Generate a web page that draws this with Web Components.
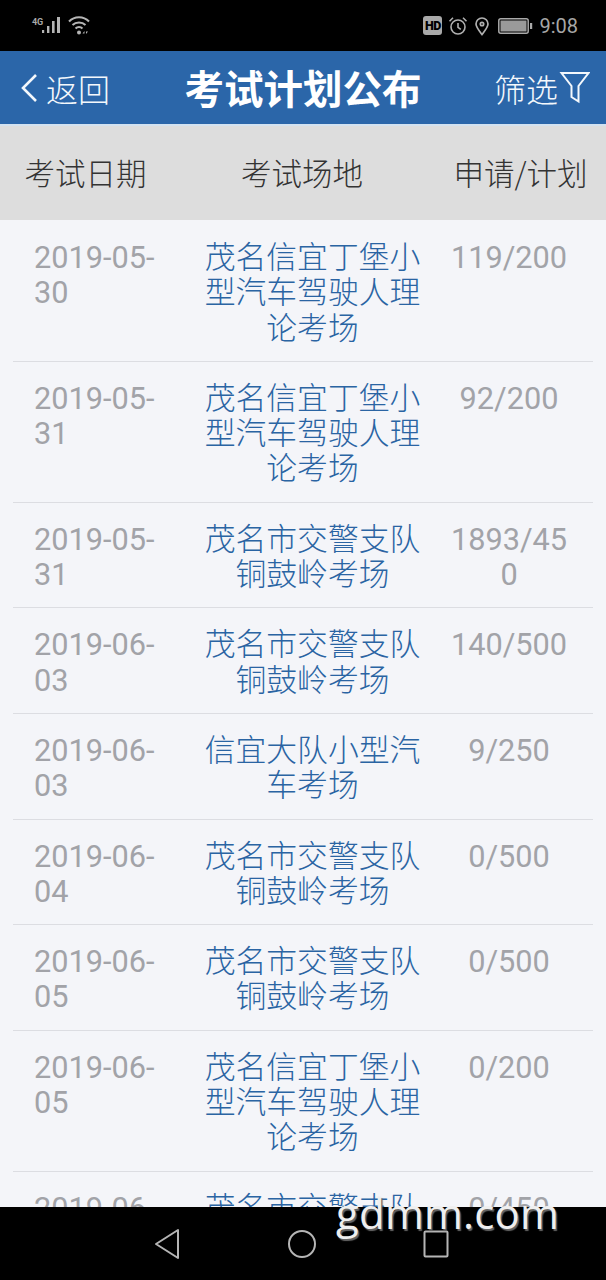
<!DOCTYPE html>
<html lang="zh-CN"><head><meta charset="utf-8"><title>考试计划公布</title>
<style>
html,body{margin:0;padding:0;background:#000}
body{width:606px;height:1280px;overflow:hidden;font-family:Roboto,"Noto Sans CJK SC",sans-serif}
</style></head><body>
<app-screen></app-screen>
<script>
const def=(name,html)=>{customElements.define(name,class extends HTMLElement{
  connectedCallback(){ if(this.shadowRoot)return; const r=this.attachShadow({mode:'open'}); r.innerHTML=typeof html==='function'?html(this):html; }
});};
def('status-bar',`<style>
:host{display:flex;height:51px;background:#000;align-items:center;padding:0 28px 0 31px;box-sizing:border-box;color:#a9a9a9;flex:none}
.left{display:flex;align-items:center;gap:5px;margin-top:-1px}
.sig{position:relative;width:32px;height:26px}
.g{font:700 9px/8px Roboto,sans-serif;position:absolute;left:1px;top:5.500px;letter-spacing:-.2px}
svg{display:block;flex:none}
.sp{flex:1}
.right{display:flex;align-items:center}
.hd{width:19px;height:19px;background:#a9a9a9;color:#000;border-radius:3px;font:900 12.500px/19px Roboto,sans-serif;text-align:center;letter-spacing:-.5px;margin-right:6px;margin-left:1px}
.t{font:400 20px/22px Roboto,sans-serif;margin-left:6px;color:#a6a6a6}
</style>
<div class="left"><div class="sig"><span class="g">4G</span>
<svg width="32" height="26" viewBox="0 0 32 26" fill="#b5b5b5"><rect x="11" y="18" width="2.200" height="3"/><rect x="16" y="14" width="2.400" height="7"/><rect x="21" y="9" width="2.600" height="12"/><rect x="26" y="5" width="3" height="16"/></svg></div>
<svg width="24" height="22" viewBox="0 0 24 22" fill="none" stroke="#b5b5b5" stroke-width="2"><path d="M1 7.500C6.500 1.800 15.500 1.800 21 7.500"/><path d="M4.500 11C8 7.500 14 7.500 17.500 11"/><path d="M7.500 14.500c2-1.900 5-1.900 7 0"/><circle cx="11" cy="18.500" r="2" fill="#b5b5b5" stroke="none"/><path d="M14.500 19.500l2-2.500v2.500zM18 17.500v2.500l2-2.500z" fill="#b5b5b5" stroke="none"/></svg></div>
<div class="sp"></div>
<div class="right"><div class="hd">HD</div>
<svg width="20" height="20" viewBox="0 0 20 20" fill="none" stroke="#b0b0b0" stroke-width="1.600"><circle cx="10" cy="11" r="7"/><path d="M10 7v4.400l2.800 2M1.500 5.200 5 1.800M18.500 5.200 15 1.800"/></svg>
<svg width="16" height="20" viewBox="0 0 16 20" fill="none" stroke="#b0b0b0" stroke-width="1.700" style="margin-left:6px"><path d="M8 18.500C4.500 14 2 11 2 8a6 6 0 0 1 12 0c0 3-2.500 6-6 10.500Z"/><circle cx="8" cy="8" r="1.700"/></svg>
<svg width="35" height="16" viewBox="0 0 35 16" style="margin-left:8px"><rect x=".8" y=".8" width="29.400" height="14.400" rx="2" fill="#000" stroke="#a9a9a9" stroke-width="1.500"/><rect x="2.500" y="2.500" width="26" height="11" fill="#9a9a9a"/><rect x="32" y="5" width="2.200" height="6" fill="#a9a9a9"/></svg>
<div class="t">9:08</div></div>`);
def('app-header',`<style>
:host{display:grid;grid-template-columns:1fr auto 1fr;align-items:center;height:73px;background:#2b66a9;color:#f4f8fc;flex:none;box-sizing:border-box;padding:0 16px 0 20px;font-family:"Noto Sans CJK SC",sans-serif}
.l,.r{display:flex;align-items:center;font-size:32px;font-weight:300;line-height:40px}
.r{justify-content:flex-end}
.r span{margin-right:1px}
.l svg{margin-right:8px}
h1{margin:-2px 0 0 -4px;font-size:39.500px;font-weight:700;line-height:44px;color:#fff}
svg{display:block;flex:none}
</style>
<div class="l"><svg width="18" height="30" viewBox="0 0 18 30" fill="none" stroke="#f4f8fc" stroke-width="2.600"><path d="M16 2 3 15l13 13"/></svg><span>返回</span></div>
<h1>考试计划公布</h1>
<div class="r"><span>筛选</span><svg width="31" height="34" viewBox="0 0 31 34" fill="none" stroke="#f4f8fc" stroke-width="2"><path d="M2.500 2H29.500L19.500 15V30.500L12.500 26V15Z"/></svg></div>`);
def('plan-head',`<style>
:host{display:grid;grid-template-columns:171px 262px 1fr;height:96px;align-items:center;background:#dddddd;color:#333;flex:none;font:300 30.500px/36px "Noto Sans CJK SC",sans-serif;border-top:2px solid #d3e2f0;box-sizing:border-box;padding-bottom:2px}
div{text-align:center;white-space:nowrap}
.c{padding-left:2px}
</style><div>考试日期</div><div>考试场地</div><div class="c">申请/计划</div>`);
def('plan-row',(h)=>`<style>
:host{display:grid;grid-template-columns:172px 220px 1fr;margin:0 13px;padding:16px 0 18px;border-bottom:1.500px solid #dcdde2;box-sizing:border-box;font-size:30.700px;line-height:35.300px;flex:none}
.d{color:#a2a3a8;padding:3px 0 0 21px;margin-bottom:-3px;width:125px;word-break:break-all;margin-right:-30px}
.p{color:#2a64a3;text-align:center;font-family:"Noto Sans CJK SC",sans-serif;font-size:30.800px;font-weight:300;margin-left:17px;width:221px}
.c{color:#a2a3a8;text-align:center;word-break:break-all;width:118px;margin-left:45px;padding-top:3px;margin-bottom:-3px}
</style><div class="d">${h.getAttribute('date')}</div><div class="p">${h.getAttribute('place')}</div><div class="c">${h.getAttribute('count')}</div>`);
const A='茂名信宜丁堡小型汽车驾驶人理论考场',B='茂名市交警支队铜鼓岭考场',C='信宜大队小型汽车考场';
const rows=[['2019-05-30',A,'119/200'],['2019-05-31',A,'92/200'],['2019-05-31',B,'1893/450'],['2019-06-03',B,'140/500'],['2019-06-03',C,'9/250'],['2019-06-04',B,'0/500'],['2019-06-05',B,'0/500'],['2019-06-05',A,'0/200'],['2019-06-06',B,'0/450']];
def('plan-list',`<style>:host{display:flex;flex-direction:column;flex:1;min-height:0;overflow:hidden;background:#f4f5f9;padding-top:1px}</style>`+rows.map(r=>`<plan-row date="${r[0]}" place="${r[1]}" count="${r[2]}"></plan-row>`).join(''));
def('nav-bar',`<style>
:host{display:flex;justify-content:center;align-items:center;height:73px;background:#000;flex:none;box-sizing:border-box;position:relative}
svg{display:block;flex:none}
.w{position:absolute;left:336px;top:-22px;font:500 42px/56px "Open Sans","Noto Sans",sans-serif;color:#efefef;letter-spacing:.2px;text-shadow:1.500px 1.500px 1px #666}
</style>
<svg width="26" height="32" viewBox="0 0 26 32" fill="none" stroke="#b5b5b5" stroke-width="2" stroke-linejoin="round" style="margin-left:-3px"><path d="M24 2V30L2 16Z"/></svg>
<svg width="30" height="30" viewBox="0 0 30 30" fill="none" stroke="#b5b5b5" stroke-width="2" style="margin-left:107px"><circle cx="15" cy="15" r="13"/></svg>
<svg width="26" height="28" viewBox="0 0 26 28" fill="none" stroke="#b5b5b5" stroke-width="2" style="margin-left:106px"><rect x="1.500" y="1.500" width="23" height="25" rx="1"/></svg>
<div class="w">gdmm.com</div>`);
def('app-screen',`<style>:host{display:flex;flex-direction:column;width:606px;height:1280px;overflow:hidden}</style>
<status-bar></status-bar><app-header></app-header><plan-head></plan-head><plan-list></plan-list><nav-bar></nav-bar>`);
</script></body></html>
